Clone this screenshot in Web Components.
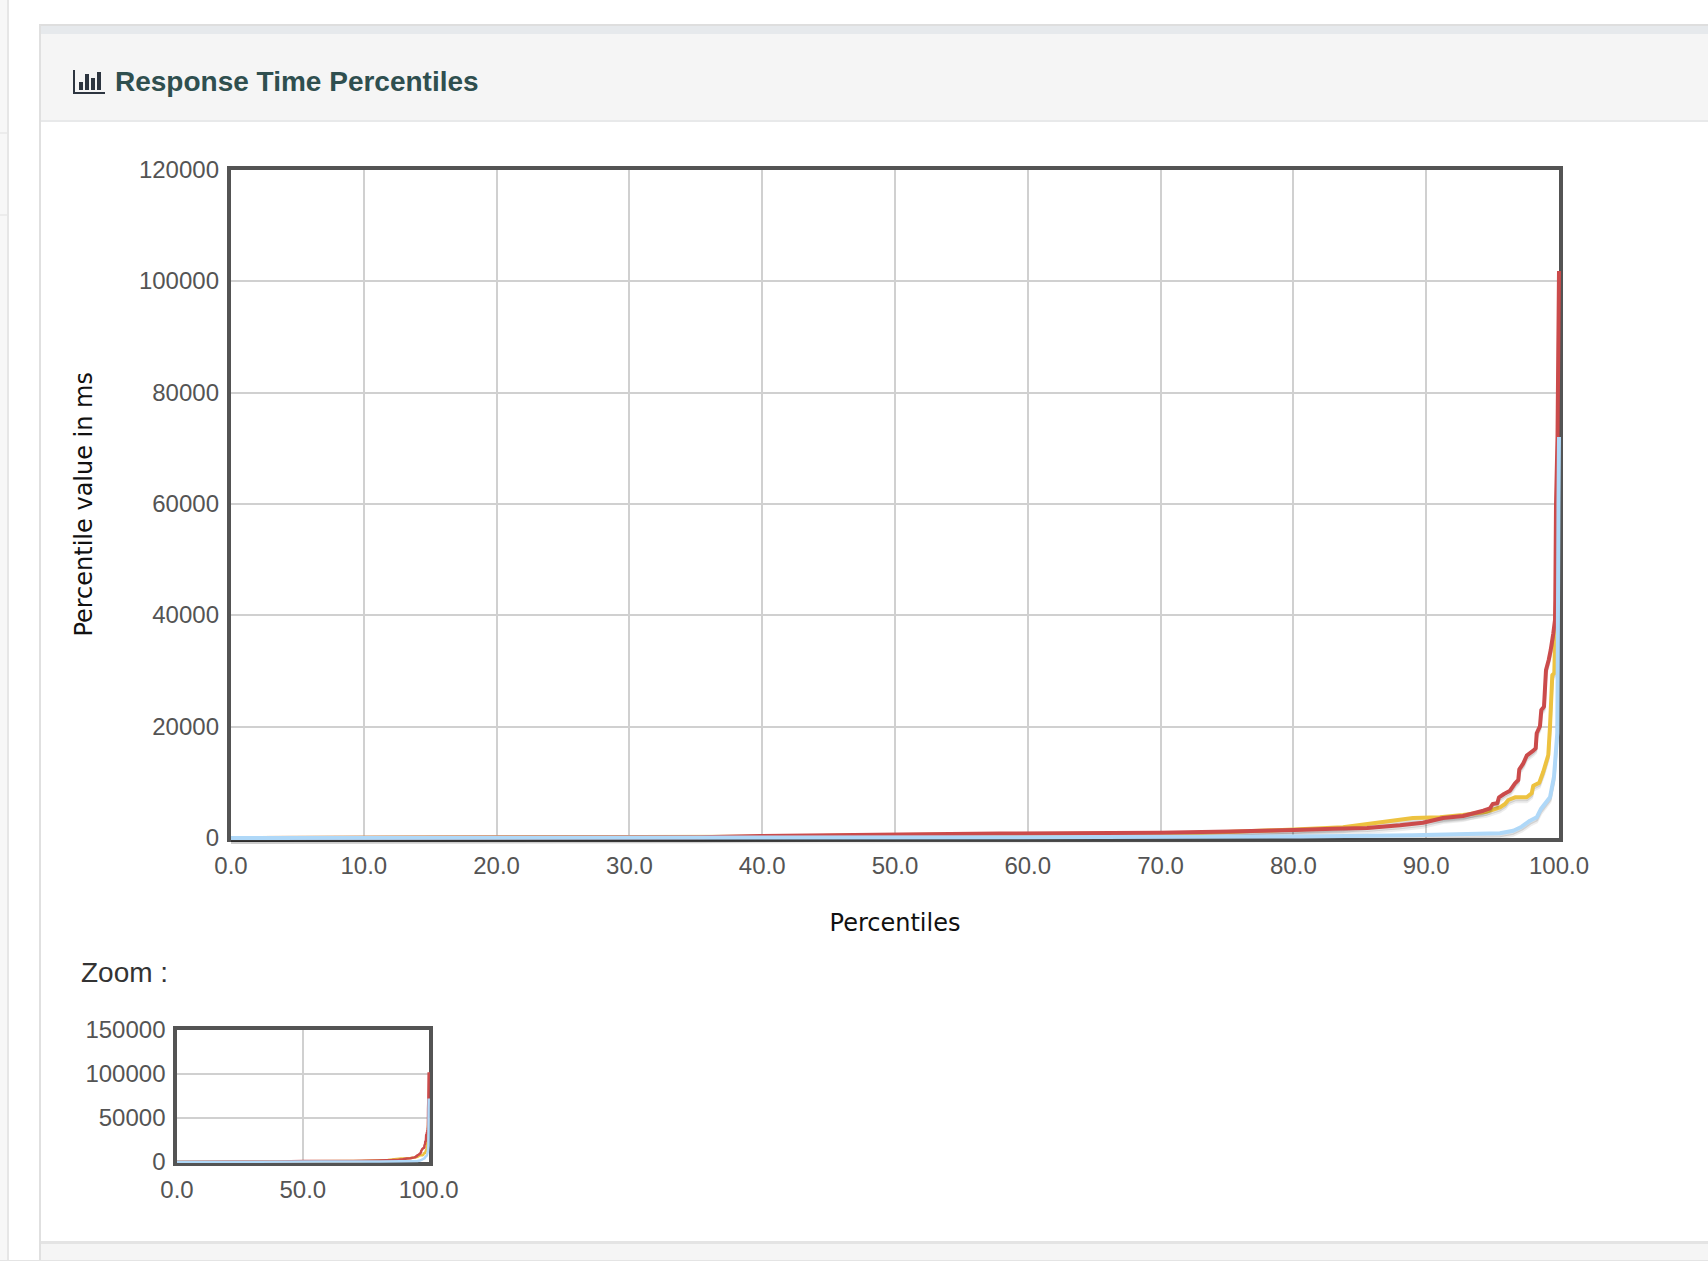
<!DOCTYPE html>
<html>
<head>
<meta charset="utf-8">
<title>Response Time Percentiles</title>
<style>
  html, body { margin: 0; padding: 0; background: #fff; overflow: hidden; }
</style>
</head>
<body>
<dash-layout>
  <chart-panel heading="Response Time Percentiles">
    <flot-chart width="1328" height="668" xstep="132.8" ystep="111.333"
      xticks="0.0,10.0,20.0,30.0,40.0,50.0,60.0,70.0,80.0,90.0,100.0"
      yticks="120000,100000,80000,60000,40000,20000,0"
      ylabel="Percentile value in ms" xlabel="Percentiles"
      line="4" shadow="1"></flot-chart>
    <zoom-chart>
      <flot-chart width="251.7" height="131.7" xstep="125.85" ystep="43.9"
        xticks="0.0,50.0,100.0" yticks="150000,100000,50000,0"
        ymax="150000" line="2.5"></flot-chart>
    </zoom-chart>
  </chart-panel>
</dash-layout>

<script>
// curves read off in plot pixels of the big chart, page coordinates
const SERIES = [
  { color: '#edc240', pts: [[231,838],[760,836.8],[900,835],[1200,833],[1240,831.5],[1294,829.5],[1343,827.3],[1377,822.7],[1413,818],[1440,817.3],[1463,815],[1487,811.7],[1500,807.3],[1505,804],[1508.3,800],[1515,797.3],[1526.7,797.3],[1531.7,793.3],[1533.3,785.7],[1539.3,782.7],[1543.3,771.7],[1548.3,755],[1550,726.7],[1552.3,675],[1554.3,673.3],[1555,641.7],[1557,560]] },
  { color: '#cb4b4b', pts: [[231,838],[500,837.6],[700,837.2],[760,836],[900,834.5],[1000,833.5],[1160,832.8],[1230,831.5],[1294,830],[1333,828.7],[1367,828],[1400,825.3],[1423,822.7],[1443,818],[1463,816],[1483.3,810.7],[1490,808.3],[1492.7,804],[1497.3,803.3],[1499,797.3],[1504,794],[1510,790.7],[1515,783.3],[1518.3,780],[1519.3,769.3],[1523.3,763.3],[1526.7,755.7],[1533.3,750.7],[1535.7,748.3],[1536.7,733.3],[1540,726],[1541.3,710],[1544,706.7],[1546,670],[1548.7,660],[1550.7,650],[1553.3,633.3],[1555,620],[1555.3,600],[1556,505],[1557.5,437],[1559,271]] },
  { color: '#afd8f8', pts: [[231,838],[1000,837.3],[1300,836.5],[1413,835.3],[1500,833.3],[1513.3,830.7],[1521.7,826.7],[1530,820.7],[1536.7,817.3],[1540.7,809.3],[1550,797.3],[1554,776.7],[1557.3,733],[1557.7,666.7],[1558.5,500],[1559,437]] }
];

const layoutTemplate = document.createElement('template');
layoutTemplate.innerHTML = `
<style>
  :host {
    display: flex;
    box-sizing: border-box;
    height: 1261px;
    border-bottom: 1px solid #e4e4e4;
    font-family: "Liberation Sans", Arial, sans-serif;
  }
  .side {
    box-sizing: border-box;
    width: 9px;
    flex: none;
    display: flex;
    flex-direction: column;
    background: #f7f7f7;
    border-right: 2px solid #e6e6e6;
  }
  .side div { border-bottom: 2px solid #ececec; }
  .side div:nth-child(1) { height: 132px; }
  .side div:nth-child(2) { height: 80px; }
  .main {
    flex: 1;
    min-width: 0;
    display: flex;
    padding: 24px 0 0 30px;
  }
</style>
<nav class="side"><div></div><div></div></nav>
<main class="main"><slot></slot></main>
`;

class DashLayout extends HTMLElement {
  connectedCallback() {
    if (this.shadowRoot) return;
    this.attachShadow({ mode: 'open' }).appendChild(layoutTemplate.content.cloneNode(true));
  }
}

const panelTemplate = document.createElement('template');
panelTemplate.innerHTML = `
<style>
  :host {
    flex: 1;
    min-width: 0;
    display: flex;
    flex-direction: column;
    border-top: 2px solid #dedede;
    border-left: 2px solid #e0e0e0;
  }
  .head {
    box-sizing: border-box;
    height: 96px;
    display: flex;
    align-items: center;
    gap: 10px;
    padding: 9px 0 0 32px;
    background: #f5f5f5;
    border-top: 8px solid #e6e9ec;
    border-bottom: 2px solid #e8e9ea;
  }
  .head svg { display: block; flex: none; }
  h3 {
    margin: 0;
    font-size: 28px;
    font-weight: bold;
    color: #2f4f4f;
    line-height: 32px;
  }
  .body {
    flex: 1;
    display: flex;
    flex-direction: column;
    padding: 44px 0 0 31px;
    background: #fff;
  }
  .foot {
    height: 16px;
    background: #f5f5f5;
    border-top: 3px solid #e4e4e4;
  }
</style>
<div class="head">
  <svg width="32" height="24" viewBox="0 0 32 24" fill="#2d3540">
    <path d="M0 0h2v22h30v2H0z"/>
    <path d="M6 12h4v8H6zM12 4h4v16h-4zM18 8h4v12h-4zM24 2h4v18h-4z"/>
  </svg>
  <h3></h3>
</div>
<div class="body"><slot></slot></div>
<div class="foot"></div>
`;

class ChartPanel extends HTMLElement {
  connectedCallback() {
    if (this.shadowRoot) return;
    const root = this.attachShadow({ mode: 'open' });
    root.appendChild(panelTemplate.content.cloneNode(true));
    root.querySelector('h3').textContent = this.getAttribute('heading');
  }
}

const zoomTemplate = document.createElement('template');
zoomTemplate.innerHTML = `
<style>
  :host { display: block; }
  h4 {
    margin: 0 0 40px 9px;
    height: 30px;
    font-size: 28px;
    font-weight: normal;
    line-height: 34px;
    color: #333;
  }
</style>
<h4>Zoom :</h4>
<slot></slot>
`;

class ZoomChart extends HTMLElement {
  connectedCallback() {
    if (this.shadowRoot) return;
    this.attachShadow({ mode: 'open' }).appendChild(zoomTemplate.content.cloneNode(true));
  }
}

class FlotChart extends HTMLElement {
  connectedCallback() {
    if (this.shadowRoot) return;
    const w = +this.getAttribute('width');
    const h = +this.getAttribute('height');
    const xstep = +this.getAttribute('xstep');
    const ystep = +this.getAttribute('ystep');
    const xticks = this.getAttribute('xticks').split(',');
    const yticks = this.getAttribute('yticks').split(',');
    const ymax = +(this.getAttribute('ymax') || 120000);
    const lw = +this.getAttribute('line');
    const ylabel = this.getAttribute('ylabel');
    const xlabel = this.getAttribute('xlabel');
    const labelCol = ylabel ? 22 : 0;
    const tickCol = ylabel ? 133 : 101;
    const gap = ylabel ? 8 : 7.5;

    let grid = '';
    xticks.forEach((t, i) => {
      const x = Math.round(i * xstep);
      if (i > 0 && i < xticks.length - 1) grid += `<line x1="${x}" x2="${x}" y1="0" y2="${h}"/>`;
    });
    yticks.forEach((t, i) => {
      const y = Math.round(i * ystep);
      if (i > 0 && i < yticks.length - 1) grid += `<line x1="0" x2="${w}" y1="${y}" y2="${y}"/>`;
    });

    // the curves keep the percent/value scale of the big chart
    const project = ([px, py]) => {
      const pct = (px - 231) / 1328;
      const val = (838 - py) / 668 * 120000;
      return [pct * w, h - val / ymax * h];
    };
    let curves = '';
    SERIES.forEach(s => {
      const pts = s.pts.map(project);
      const str = dy => pts.map(p => p[0].toFixed(1) + ',' + (p[1] + dy).toFixed(1)).join(' ');
      if (this.hasAttribute('shadow')) {
        curves += `<polyline points="${str(4.5)}" stroke="rgba(0,0,0,.07)" stroke-width="3"/>`;
        curves += `<polyline points="${str(2.5)}" stroke="rgba(0,0,0,.12)" stroke-width="3"/>`;
      }
      curves += `<polyline points="${str(0)}" stroke="${s.color}" stroke-width="${lw}"/>`;
    });

    const root = this.attachShadow({ mode: 'open' });
    root.innerHTML = `
<style>
  :host {
    display: grid;
    width: max-content;
    grid-template-columns: ${labelCol}px ${tickCol}px ${w + 8}px;
    grid-template-rows: ${h + 8}px 46px ${xlabel ? '68px' : ''};
    font-family: "Liberation Sans", Arial, sans-serif;
    --gridline: #d0d0d0;
  }
  .ylabel {
    grid-row: 1;
    grid-column: 1;
    align-self: center;
    justify-self: center;
    writing-mode: vertical-rl;
    rotate: 180deg;
    white-space: nowrap;
    font: 24px "DejaVu Sans", sans-serif;
    line-height: 22px;
    color: #111;
    padding-right: 2px;
  }
  .yticks {
    grid-row: 1;
    grid-column: 2;
    align-self: start;
    margin-top: ${4 - ystep / 2}px;
    padding-right: ${gap}px;
    display: grid;
    grid-auto-rows: ${ystep}px;
    justify-items: end;
    align-items: center;
    font-size: 24px;
    color: #545454;
  }
  .plot {
    grid-row: 1;
    grid-column: 3;
    box-sizing: border-box;
    border: 4px solid #545454;
    width: ${w + 8}px;
    height: ${h + 8}px;
  }
  svg { display: block; overflow: visible; }
  .grid line { stroke: var(--gridline); stroke-width: 2; }
  .lines polyline { fill: none; stroke-linejoin: round; }
  .xticks {
    grid-row: 2;
    grid-column: 3;
    justify-self: start;
    margin-left: ${4 - xstep / 2}px;
    display: grid;
    grid-template-columns: repeat(${xticks.length}, ${xstep}px);
    justify-items: center;
    font-size: 24px;
    line-height: 48px;
    color: #545454;
  }
  .xlabel {
    grid-row: 3;
    grid-column: 3;
    text-align: center;
    font: 24px "DejaVu Sans", sans-serif;
    line-height: 71px;
    color: #111;
  }
</style>
${ylabel ? `<div class="ylabel">${ylabel}</div>` : ''}
<div class="yticks">${yticks.map(t => `<span>${t}</span>`).join('')}</div>
<div class="plot">
  <svg width="${w}" height="${h}" viewBox="0 0 ${w} ${h}">
    <g class="grid">${grid}</g>
    <g class="lines">${curves}</g>
  </svg>
</div>
<div class="xticks">${xticks.map(t => `<span>${t}</span>`).join('')}</div>
${xlabel ? `<div class="xlabel">${xlabel}</div>` : ''}
`;
  }
}

customElements.define('dash-layout', DashLayout);
customElements.define('chart-panel', ChartPanel);
customElements.define('zoom-chart', ZoomChart);
customElements.define('flot-chart', FlotChart);
</script>
</body>
</html>
